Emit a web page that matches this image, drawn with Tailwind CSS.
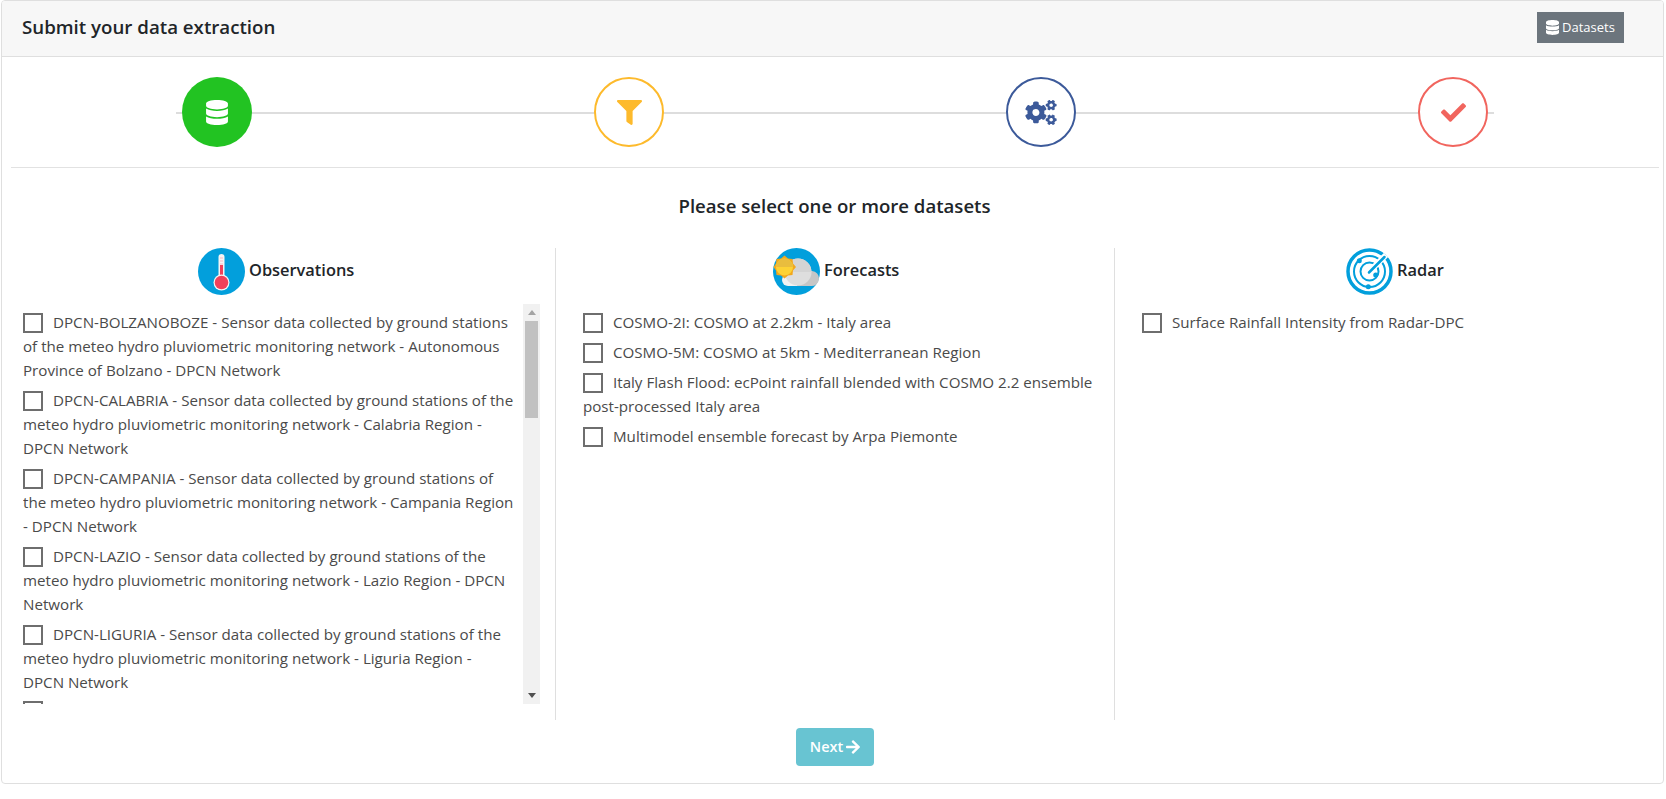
<!DOCTYPE html>
<html lang="en">
<head>
  <meta charset="UTF-8"/>
  <title>Submit your data extraction</title>
  <script src="https://cdn.jsdelivr.net/npm/@tailwindcss/browser@4"></script>
</head>
<body class="bg-white font-['Open_Sans','Noto_Sans',sans-serif] text-[#212529]">
  <div class="ml-[1px] mr-[2px] h-[784px] border border-[#dfdfdf] rounded-[4px] flex flex-col overflow-hidden">

    <!-- card header -->
    <div class="h-[56px] shrink-0 bg-[#f7f7f7] border-b border-[#dfdfdf] flex items-center justify-between pl-[20px] pr-[39px]">
      <h1 class="text-[18.7px] font-semibold leading-[50px] -mt-[4px]">Submit your data extraction</h1>
      <button class="w-[87px] h-[31px] -mt-[2px] bg-[#6c757d] text-white text-[13px] flex items-center justify-center gap-[3px]">
        <svg class="w-[13px] h-[15px] -mt-[1px]" viewBox="0 0 448 512" fill="currentColor"><path d="M448 73.143v45.714C448 159.143 347.667 192 224 192S0 159.143 0 118.857V73.143C0 32.857 100.333 0 224 0s224 32.857 224 73.143zM448 176v102.857C448 319.143 347.667 352 224 352S0 319.143 0 278.857V176c48.125 33.143 136.208 48.572 224 48.572S399.874 209.143 448 176zm0 160v102.857C448 479.143 347.667 512 224 512S0 479.143 0 438.857V336c48.125 33.143 136.208 48.572 224 48.572S399.874 369.143 448 336z"/></svg>
        Datasets
      </button>
    </div>

    <!-- stepper -->
    <div class="ml-[9px] mr-[4px] h-[111px] shrink-0 border-b border-[#e2e2e2] pt-[20px]">
      <div class="relative ml-[165px] w-[1318px] h-[70px]">
        <div class="absolute left-0 right-0 top-[35px] h-[2px] bg-[#dddddd]"></div>
        <div class="relative flex justify-between px-[6px]">
          <div class="w-[70px] h-[70px] rounded-full bg-[#22c322] flex items-center justify-center">
            <svg class="w-[22px] h-[25px] text-white" viewBox="0 0 448 512" fill="currentColor"><path d="M448 73.143v45.714C448 159.143 347.667 192 224 192S0 159.143 0 118.857V73.143C0 32.857 100.333 0 224 0s224 32.857 224 73.143zM448 176v102.857C448 319.143 347.667 352 224 352S0 319.143 0 278.857V176c48.125 33.143 136.208 48.572 224 48.572S399.874 209.143 448 176zm0 160v102.857C448 479.143 347.667 512 224 512S0 479.143 0 438.857V336c48.125 33.143 136.208 48.572 224 48.572S399.874 369.143 448 336z"/></svg>
          </div>
          <div class="w-[70px] h-[70px] rounded-full bg-white border-2 border-[#fdba2c] flex items-center justify-center">
            <svg class="w-[25px] h-[25px] text-[#fdba2c]" viewBox="0 0 512 512" fill="currentColor"><path d="M487.976 0H24.028C2.71 0-8.047 25.866 7.058 40.971L192 225.941V432c0 7.831 3.821 15.17 10.237 19.662l80 55.98C298.02 518.69 320 507.493 320 487.98V225.941l184.947-184.97C520.021 25.896 509.338 0 487.976 0z"/></svg>
          </div>
          <div class="w-[70px] h-[70px] rounded-full bg-white border-2 border-[#3c5a9a] flex items-center justify-center">
            <svg class="w-[32px] h-[25px] text-[#3c5a9a]" viewBox="0 0 640 512" fill="currentColor"><path d="M512.1 191l-8.2 14.3c-3 5.3-9.4 7.5-15.1 5.4-11.8-4.4-22.6-10.7-32.1-18.6-4.6-3.8-5.8-10.5-2.8-15.7l8.2-14.3c-6.9-8-12.3-17.3-15.9-27.4h-16.5c-6 0-11.2-4.3-12.2-10.3-2-12-2.1-24.6 0-37.1 1-6 6.2-10.4 12.2-10.4h16.5c3.6-10.1 9-19.4 15.9-27.4l-8.2-14.3c-3-5.2-1.9-11.9 2.8-15.7 9.5-7.9 20.4-14.2 32.1-18.6 5.7-2.1 12.1.1 15.1 5.4l8.2 14.3c10.5-1.9 21.2-1.9 31.7 0L552 6.3c3-5.3 9.4-7.5 15.1-5.4 11.8 4.4 22.6 10.7 32.1 18.6 4.6 3.8 5.8 10.5 2.8 15.7l-8.2 14.3c6.9 8 12.3 17.3 15.9 27.4h16.5c6 0 11.2 4.3 12.2 10.3 2 12 2.1 24.6 0 37.1-1 6-6.2 10.4-12.2 10.4h-16.5c-3.6 10.1-9 19.4-15.9 27.4l8.2 14.3c3 5.2 1.9 11.9-2.8 15.7-9.5 7.9-20.4 14.2-32.1 18.6-5.7 2.1-12.1-.1-15.1-5.4l-8.2-14.3c-10.4 1.9-21.2 1.9-31.7 0zm-10.5-58.8c38.5 29.6 82.4-14.3 52.8-52.8-38.5-29.7-82.4 14.3-52.8 52.8zM386.3 286.1l33.7 16.8c10.1 5.8 14.5 18.1 10.5 29.1-8.9 24.2-26.4 46.4-42.6 65.8-7.4 8.9-20.2 11.1-30.3 5.3l-29.1-16.8c-16 13.7-34.6 24.6-54.9 31.7v33.6c0 11.6-8.3 21.6-19.7 23.6-24.6 4.2-50.4 4.4-75.9 0-11.5-2-20-11.9-20-23.6V418c-20.3-7.2-38.9-18-54.9-31.7L74 403c-10 5.8-22.9 3.6-30.3-5.3-16.2-19.4-33.3-41.6-42.2-65.7-4-10.9.4-23.2 10.5-29.1l33.3-16.8c-3.9-20.9-3.9-42.4 0-63.4L12 205.8c-10.1-5.8-14.6-18.1-10.5-29 8.9-24.2 26-46.4 42.2-65.8 7.4-8.9 20.2-11.1 30.3-5.3l29.1 16.8c16-13.7 34.6-24.6 54.9-31.7V57.1c0-11.5 8.2-21.5 19.6-23.5 24.6-4.2 50.5-4.4 76-.1 11.5 2 20 11.9 20 23.6v33.6c20.3 7.2 38.9 18 54.9 31.7l29.1-16.8c10-5.8 22.9-3.6 30.3 5.3 16.2 19.4 33.2 41.6 42.1 65.8 4 10.9.1 23.2-10 29.1l-33.7 16.8c3.9 21 3.9 42.5 0 63.5zm-117.6 21.1c59.2-77-28.7-164.9-105.7-105.7-59.2 77 28.7 164.9 105.7 105.7zm243.4 182.7l-8.2 14.3c-3 5.3-9.4 7.5-15.1 5.4-11.8-4.4-22.6-10.7-32.1-18.6-4.6-3.8-5.8-10.5-2.8-15.7l8.2-14.3c-6.9-8-12.3-17.3-15.9-27.4h-16.5c-6 0-11.2-4.3-12.2-10.3-2-12-2.1-24.6 0-37.1 1-6 6.2-10.4 12.2-10.4h16.5c3.6-10.1 9-19.4 15.9-27.4l-8.2-14.3c-3-5.2-1.9-11.9 2.8-15.7 9.5-7.9 20.4-14.2 32.1-18.6 5.7-2.1 12.1.1 15.1 5.4l8.2 14.3c10.5-1.9 21.2-1.9 31.7 0l8.2-14.3c3-5.3 9.4-7.5 15.1-5.4 11.8 4.4 22.6 10.7 32.1 18.6 4.6 3.8 5.8 10.5 2.8 15.7l-8.2 14.3c6.9 8 12.3 17.3 15.9 27.4h16.5c6 0 11.2 4.3 12.2 10.3 2 12 2.1 24.6 0 37.1-1 6-6.2 10.4-12.2 10.4h-16.5c-3.6 10.1-9 19.4-15.9 27.4l8.2 14.3c3 5.2 1.9 11.9-2.8 15.7-9.5 7.9-20.4 14.2-32.1 18.6-5.7 2.1-12.1-.1-15.1-5.4l-8.2-14.3c-10.4 1.9-21.2 1.9-31.7 0zM501.6 431c38.5 29.6 82.4-14.3 52.8-52.8-38.5-29.6-82.4 14.3-52.8 52.8z"/></svg>
          </div>
          <div class="w-[70px] h-[70px] rounded-full bg-white border-2 border-[#f1655e] flex items-center justify-center">
            <svg class="w-[25px] h-[25px] text-[#f1655e]" viewBox="0 0 512 512" fill="currentColor"><path d="M173.898 439.404l-166.4-166.4c-9.997-9.997-9.997-26.206 0-36.204l36.203-36.204c9.997-9.998 26.207-9.998 36.204 0L192 312.69 432.095 72.596c9.997-9.997 26.207-9.997 36.204 0l36.203 36.204c9.997 9.997 9.997 26.206 0 36.204l-294.4 294.401c-9.998 9.997-26.207 9.997-36.204-.001z"/></svg>
          </div>
        </div>
      </div>
    </div>

    <h2 class="h-[80px] shrink-0 pt-[25px] pl-[4px] text-center text-[18.6px] leading-[25px] font-semibold">Please select one or more datasets</h2>

    <!-- dataset columns -->
    <div class="flex h-[472px] shrink-0 text-[15.15px] leading-[24px] text-[#4a4a4a]">

      <div class="w-[554px] shrink-0 border-r border-[#dfdfdf] pl-[21px] flex flex-col">
        <div class="h-[56px] shrink-0 flex items-start gap-[4px] pl-[175px]">
          <svg class="w-[47px] h-[47px] shrink-0" viewBox="0 0 47 47">
            <circle cx="23.5" cy="23.5" r="23.5" fill="#029fdc"/>
            <rect x="20.5" y="6" width="6" height="28" rx="3" fill="#f4f4f4"/>
            <rect x="22" y="17" width="3" height="14" fill="#f0405a"/>
            <path d="M22 10h3M22 13h3M22 16h3" stroke="#f7b9c2" stroke-width="1"/>
            <circle cx="23.5" cy="34.5" r="8" fill="#f4f4f4"/>
            <circle cx="23.5" cy="34.5" r="6.8" fill="#f0405a"/>
          </svg>
          <span class="mt-[10px] text-[16.4px] font-semibold text-[#212529]">Observations</span>
        </div>
        <div class="flex h-[400px] w-[517px]">
          <div class="flex-1 overflow-hidden pt-[6px] flex flex-col gap-[6px]">
            <div class="whitespace-nowrap"><span class="inline-block align-[-5px] w-[20px] h-[20px] border-2 border-[#6e6e6e] mr-[10px]"></span>DPCN-BOLZANOBOZE - Sensor data collected by ground stations<br>of the meteo hydro pluviometric monitoring network - Autonomous<br>Province of Bolzano - DPCN Network</div>
            <div class="whitespace-nowrap"><span class="inline-block align-[-5px] w-[20px] h-[20px] border-2 border-[#6e6e6e] mr-[10px]"></span>DPCN-CALABRIA - Sensor data collected by ground stations of the<br>meteo hydro pluviometric monitoring network - Calabria Region -<br>DPCN Network</div>
            <div class="whitespace-nowrap"><span class="inline-block align-[-5px] w-[20px] h-[20px] border-2 border-[#6e6e6e] mr-[10px]"></span>DPCN-CAMPANIA - Sensor data collected by ground stations of<br>the meteo hydro pluviometric monitoring network - Campania Region<br>- DPCN Network</div>
            <div class="whitespace-nowrap"><span class="inline-block align-[-5px] w-[20px] h-[20px] border-2 border-[#6e6e6e] mr-[10px]"></span>DPCN-LAZIO - Sensor data collected by ground stations of the<br>meteo hydro pluviometric monitoring network - Lazio Region - DPCN<br>Network</div>
            <div class="whitespace-nowrap"><span class="inline-block align-[-5px] w-[20px] h-[20px] border-2 border-[#6e6e6e] mr-[10px]"></span>DPCN-LIGURIA - Sensor data collected by ground stations of the<br>meteo hydro pluviometric monitoring network - Liguria Region -<br>DPCN Network</div>
            <div class="shrink-0 h-[20px] mt-[1px]"><span class="block w-[20px] h-[20px] border-2 border-[#6e6e6e]"></span></div>
          </div>
          <div class="w-[17px] shrink-0 bg-[#f1f1f1] flex flex-col items-center">
            <div class="h-[17px] flex items-center"><div class="border-x-[4px] border-x-transparent border-b-[5px] border-b-[#a3a3a3]"></div></div>
            <div class="w-[13px] h-[97px] bg-[#c1c1c1]"></div>
            <div class="flex-1"></div>
            <div class="h-[17px] flex items-center"><div class="border-x-[4px] border-x-transparent border-t-[5px] border-t-[#505050]"></div></div>
          </div>
        </div>
      </div>

      <div class="w-[559px] shrink-0 border-r border-[#dfdfdf] pl-[27px] flex flex-col">
        <div class="h-[62px] shrink-0 flex items-start gap-[4px] pl-[190px]">
          <svg class="w-[47px] h-[47px] shrink-0" viewBox="0 0 47 47">
            <circle cx="23.5" cy="23.5" r="23.5" fill="#029fdc"/>
            <path d="M15 38a6 6 0 0 1 0-12h20v12z" fill="#f2f2f2"/>
            <path d="M24 38h14a7.500 7.500 0 0 0 1-15l-10 0z" fill="#c6c6c6"/>
            <circle cx="25" cy="24" r="13.500" fill="#dedede"/>
            <path d="M11.500 24a13.500 13.500 0 0 1 27 0z" fill="#d4d4d4"/>
            <polygon points="11.500,7.500 15,10.500 19.500,11 20,15.500 23,19 20,22.500 19.500,27 15,27.500 11.500,30.500 8,27.500 3.500,27 3,22.500 0.500,19 3,15.500 3.500,11 8,10.500" fill="#f2a81d"/>
            <circle cx="11.500" cy="19" r="8.500" fill="#fdd235"/>
            <path d="M3 19a8.500 8.500 0 0 1 17 0z" fill="#e9bd3e"/>
          </svg>
          <span class="mt-[10px] text-[16.4px] font-semibold text-[#212529]">Forecasts</span>
        </div>
        <div class="flex flex-col gap-[6px] whitespace-nowrap">
          <div><span class="inline-block align-[-5px] w-[20px] h-[20px] border-2 border-[#6e6e6e] mr-[10px]"></span>COSMO-2I: COSMO at 2.2km - Italy area</div>
          <div><span class="inline-block align-[-5px] w-[20px] h-[20px] border-2 border-[#6e6e6e] mr-[10px]"></span>COSMO-5M: COSMO at 5km - Mediterranean Region</div>
          <div><span class="inline-block align-[-5px] w-[20px] h-[20px] border-2 border-[#6e6e6e] mr-[10px]"></span>Italy Flash Flood: ecPoint rainfall blended with COSMO 2.2 ensemble<br>post-processed Italy area</div>
          <div><span class="inline-block align-[-5px] w-[20px] h-[20px] border-2 border-[#6e6e6e] mr-[10px]"></span>Multimodel ensemble forecast by Arpa Piemonte</div>
        </div>
      </div>

      <div class="flex-1 pl-[27px] flex flex-col">
        <div class="h-[62px] shrink-0 flex items-start gap-[4px] pl-[204px]">
          <svg class="w-[47px] h-[47px] shrink-0" viewBox="0 0 47 47" fill="none" stroke="#029fdc">
            <circle cx="23.5" cy="23.5" r="21.5" stroke-width="3.500"/>
            <circle cx="23.5" cy="23.5" r="15.5" stroke-width="2"/>
            <circle cx="23.5" cy="23.5" r="9" stroke-width="2"/>
            <path d="M23.5 23.5L40 7" stroke="#ffffff" stroke-width="6"/>
            <path d="M23 24.500L38.500 9" stroke-width="2.500" stroke-linecap="round"/>
            <circle cx="13.300" cy="12.700" r="2.500" fill="#029fdc" stroke="none"/>
            <circle cx="29.700" cy="27" r="2.500" fill="#029fdc" stroke="none"/>
            <circle cx="22.300" cy="38.700" r="2.500" fill="#029fdc" stroke="none"/>
          </svg>
          <span class="mt-[10px] text-[16.4px] font-semibold text-[#212529]">Radar</span>
        </div>
        <div class="whitespace-nowrap"><span class="inline-block align-[-5px] w-[20px] h-[20px] border-2 border-[#6e6e6e] mr-[10px]"></span>Surface Rainfall Intensity from Radar-DPC</div>
      </div>
    </div>

    <div class="flex justify-center pt-[8px] pl-[5px]">
      <button class="w-[78px] h-[38px] rounded-[4px] bg-[#68c4d2] text-white text-[14.5px] font-semibold flex items-center justify-center gap-[3px]">Next
        <svg class="w-[14px] h-[16px]" viewBox="0 0 448 512" fill="currentColor"><path d="M190.5 66.9l22.2-22.2c9.4-9.4 24.6-9.4 33.9 0L441 239c9.4 9.4 9.4 24.6 0 33.9L246.6 467.3c-9.4 9.4-24.6 9.4-33.9 0l-22.2-22.2c-9.5-9.5-9.3-25 .4-34.3L311.4 296H24c-13.3 0-24-10.7-24-24v-32c0-13.3 10.7-24 24-24h287.4L190.9 101.2c-9.8-9.3-10-24.8-.4-34.3z"/></svg>
      </button>
    </div>
  </div>
</body>
</html>
